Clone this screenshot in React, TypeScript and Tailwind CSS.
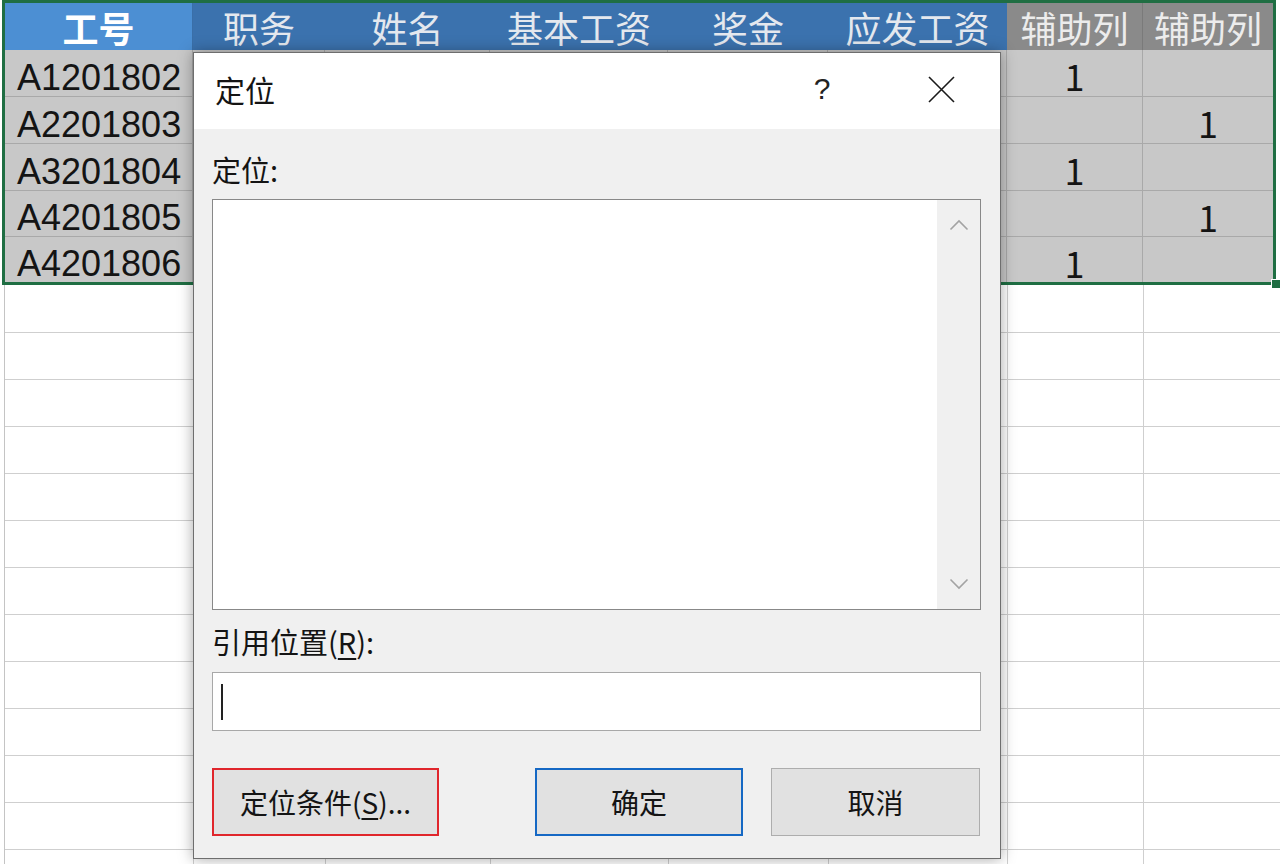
import React from "react";

const FONT = { fontFamily: '"Noto Sans CJK SC", "Noto Sans", sans-serif' };
const LAT = { fontFamily: '"Liberation Sans", Arial, sans-serif' };

const rowsData = [
  { id: "A1201802", g: "1", h: "" },
  { id: "A2201803", g: "", h: "1" },
  { id: "A3201804", g: "1", h: "" },
  { id: "A4201805", g: "", h: "1" },
  { id: "A4201806", g: "1", h: "" },
];
const rowHeights = ["h-[47px]", "h-[47px]", "h-[47px]", "h-[46px]", "h-[45px]"];

const GRID = "grid grid-cols-[188px_132px_165px_178px_160px_179px_136px_130px]";
const GRID2 = "grid grid-cols-[189px_132px_165px_178px_160px_179px_136px_141px]";

function EmptyRow({ first }: { first?: boolean }) {
  return (
    <div className={`${GRID2} ${first ? "h-[48px]" : "h-[47px]"}`}>
      {Array.from({ length: 8 }).map((_, i) => (
        <div key={i} className="border-r border-b border-[#cfcfcf]" />
      ))}
    </div>
  );
}

export default function App() {
  return (
    <div className="relative w-[1280px] h-[864px] overflow-hidden bg-white" style={FONT}>
      {/* selection box */}
      <div className="ml-[2px] w-[1274px] border-[3px] border-[#1f6e43]">
        <div className={`${GRID} h-[47px] text-[36px] leading-none`}>
          <div className="bg-[#4c8fd3] text-white font-bold flex items-center justify-center border-r border-[#3a6fa8]">工号</div>
          <div className="bg-[#3b72ae] text-[#e4e8ee] flex items-center justify-center">职务</div>
          <div className="bg-[#3b72ae] text-[#e4e8ee] flex items-center justify-center">姓名</div>
          <div className="bg-[#3b72ae] text-[#e4e8ee] flex items-center justify-center">基本工资</div>
          <div className="bg-[#3b72ae] text-[#e4e8ee] flex items-center justify-center">奖金</div>
          <div className="bg-[#3b72ae] text-[#e4e8ee] flex items-center justify-center">应发工资</div>
          <div className="bg-[#8a8a8a] text-[#ececec] flex items-center justify-center border-r border-[#7a7a7a]">辅助列</div>
          <div className="bg-[#8a8a8a] text-[#ececec] flex items-center justify-center">辅助列</div>
        </div>
        {rowsData.map((r, i) => (
          <div key={r.id} className={`${GRID} ${rowHeights[i]} bg-[#c8c8c8] text-[#141414] text-[36px] leading-none`}>
            <div className={`flex items-center pl-[12px] pt-[9px] border-r border-[#a9a9a9] ${i < 4 ? "border-b" : ""}`} style={LAT}>
              {r.id}
            </div>
            {[0, 1, 2, 3, 4].map((k) => (
              <div key={k} className={`border-r border-[#a9a9a9] ${i < 4 ? "border-b" : ""}`} />
            ))}
            <div className={`flex items-center justify-center pt-[4px] border-r border-[#a9a9a9] ${i < 4 ? "border-b" : ""}`}>{r.g}</div>
            <div className={`flex items-center justify-center pt-[4px] border-[#a9a9a9] ${i < 4 ? "border-b" : ""}`}>{r.h}</div>
          </div>
        ))}
      </div>

      {/* empty rows */}
      <div className="ml-[4px] border-l border-[#c4c4c4]">
        <EmptyRow first />
        {Array.from({ length: 12 }).map((_, i) => (
          <EmptyRow key={i} />
        ))}
      </div>

      {/* fill handle */}
      <div className="absolute left-[1271px] top-[279px] w-[10px] h-[10px] bg-[#1f6e43] border border-white" />

      {/* dialog */}
      <div className="absolute left-[193px] top-[52px] w-[808px] h-[807px] border border-[#6e6e6e] bg-[#f0f0f0] shadow-[0_0_14px_rgba(0,0,0,0.35)] flex flex-col text-[#141414]">
        <div className="h-[76px] bg-white flex items-center pl-[21px] pr-[45px] pb-[4px] shrink-0">
          <div className="text-[30px] leading-none">定位</div>
          <div className="ml-auto w-[30px] text-center text-[30px] leading-none text-[#222]" style={LAT}>?</div>
          <div className="ml-[91px] w-[27px] h-[27px]">
            <svg width="27" height="27" viewBox="0 0 27 27">
              <path d="M1 1 L26 26 M26 1 L1 26" stroke="#1a1a1a" strokeWidth="1.6" fill="none" />
            </svg>
          </div>
        </div>
        <div className="flex-1 px-[18px] flex flex-col">
          <div className="mt-[20px] h-[40px] flex items-center text-[29px] leading-none">定位:</div>
          <div className="mt-[10px] h-[411px] w-[769px] border border-[#888888] bg-white flex justify-end">
            <div className="w-[43px] h-full bg-[#f0f0f0] flex flex-col items-center justify-between py-[19px]">
              <svg width="20" height="12" viewBox="0 0 20 12">
                <path d="M1.5 10.5 L10 2 L18.5 10.5" stroke="#a3a3a3" strokeWidth="1.6" fill="none" />
              </svg>
              <svg width="20" height="12" viewBox="0 0 20 12">
                <path d="M1.5 1.5 L10 10 L18.5 1.5" stroke="#a3a3a3" strokeWidth="1.6" fill="none" />
              </svg>
            </div>
          </div>
          <div className="mt-[11px] h-[40px] flex items-center text-[29px] leading-none">
            引用位置(<span className="underline underline-offset-[4px] decoration-[1.5px]">R</span>):
          </div>
          <div className="mt-[11px] h-[59px] w-[769px] border border-[#a8a8a8] bg-white flex items-center pl-[8px]">
            <div className="w-[2px] h-[36px] bg-[#222]" />
          </div>
          <div className="mt-[37px] h-[68px] flex">
            <div className="w-[227px] h-full border-[2px] border-[#e0262c] bg-[#e1e1e1] flex items-center justify-center text-[28px] leading-none">
              定位条件(<span className="underline underline-offset-[4px] decoration-[1.5px]">S</span>)...
            </div>
            <div className="ml-[96px] w-[208px] h-full border-[2px] border-[#1568c4] bg-[#e1e1e1] flex items-center justify-center text-[28px] leading-none">
              确定
            </div>
            <div className="ml-[28px] w-[209px] h-full border border-[#adadad] bg-[#e1e1e1] flex items-center justify-center text-[28px] leading-none">
              取消
            </div>
          </div>
        </div>
      </div>
    </div>
  );
}
